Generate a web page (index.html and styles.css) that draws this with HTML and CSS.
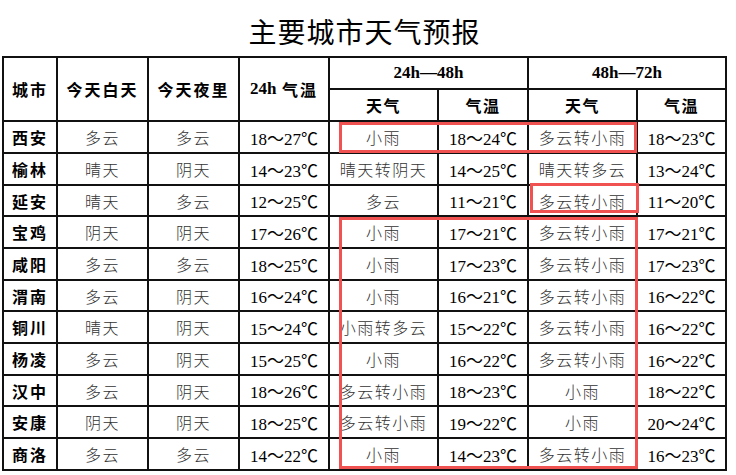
FILE: index.html
```html
<!DOCTYPE html>
<html lang="zh-CN">
<head>
<meta charset="utf-8">
<title>主要城市天气预报</title>
<link rel="stylesheet" href="styles.css">
</head>
<body>
<div class="page">
  <h1 class="title">主要城市天气预报</h1>
  <div class="sheet">
    <div class="grid">
      <div class="c hd tall">城市</div>
      <div class="c hd tall">今天白天</div>
      <div class="c hd tall">今天夜里</div>
      <div class="c hd tall"><span class="lat">24h</span>&nbsp;气温</div>
      <div class="c hd wide lat">24h—48h</div>
      <div class="c hd wide lat">48h—72h</div>
      <div class="c hd sub">天气</div>
      <div class="c hd sub">气温</div>
      <div class="c hd sub">天气</div>
      <div class="c hd sub">气温</div>

      <div class="c city">西安</div><div class="c wx">多云</div><div class="c wx">多云</div><div class="c t">18～27℃</div><div class="c wx">小雨</div><div class="c t">18～24℃</div><div class="c wx">多云转小雨</div><div class="c t">18～23℃</div>
      <div class="c city">榆林</div><div class="c wx">晴天</div><div class="c wx">阴天</div><div class="c t">14～23℃</div><div class="c wx">晴天转阴天</div><div class="c t">14～25℃</div><div class="c wx">晴天转多云</div><div class="c t">13～24℃</div>
      <div class="c city">延安</div><div class="c wx">晴天</div><div class="c wx">多云</div><div class="c t">12～25℃</div><div class="c wx">多云</div><div class="c t">11～21℃</div><div class="c wx">多云转小雨</div><div class="c t">11～20℃</div>
      <div class="c city">宝鸡</div><div class="c wx">阴天</div><div class="c wx">阴天</div><div class="c t">17～26℃</div><div class="c wx">小雨</div><div class="c t">17～21℃</div><div class="c wx">多云转小雨</div><div class="c t">17～21℃</div>
      <div class="c city">咸阳</div><div class="c wx">多云</div><div class="c wx">多云</div><div class="c t">18～25℃</div><div class="c wx">小雨</div><div class="c t">17～23℃</div><div class="c wx">多云转小雨</div><div class="c t">17～23℃</div>
      <div class="c city">渭南</div><div class="c wx">多云</div><div class="c wx">阴天</div><div class="c t">16～24℃</div><div class="c wx">小雨</div><div class="c t">16～21℃</div><div class="c wx">多云转小雨</div><div class="c t">16～22℃</div>
      <div class="c city">铜川</div><div class="c wx">晴天</div><div class="c wx">阴天</div><div class="c t">15～24℃</div><div class="c wx">小雨转多云</div><div class="c t">15～22℃</div><div class="c wx">多云转小雨</div><div class="c t">16～22℃</div>
      <div class="c city">杨凌</div><div class="c wx">多云</div><div class="c wx">阴天</div><div class="c t">15～25℃</div><div class="c wx">小雨</div><div class="c t">16～22℃</div><div class="c wx">多云转小雨</div><div class="c t">16～22℃</div>
      <div class="c city">汉中</div><div class="c wx">多云</div><div class="c wx">阴天</div><div class="c t">18～26℃</div><div class="c wx">多云转小雨</div><div class="c t">18～23℃</div><div class="c wx">小雨</div><div class="c t">18～22℃</div>
      <div class="c city">安康</div><div class="c wx">阴天</div><div class="c wx">阴天</div><div class="c t">18～25℃</div><div class="c wx">多云转小雨</div><div class="c t">19～22℃</div><div class="c wx">小雨</div><div class="c t">20～24℃</div>
      <div class="c city">商洛</div><div class="c wx">多云</div><div class="c wx">多云</div><div class="c t">14～22℃</div><div class="c wx">小雨</div><div class="c t">14～23℃</div><div class="c wx">多云转小雨</div><div class="c t">16～23℃</div>
    </div>
    <div class="mark mark-1"></div>
    <div class="mark mark-2"></div>
    <div class="mark mark-3"></div>
  </div>
</div>
</body>
</html>
```

FILE: styles.css
```css
html, body {
  margin: 0;
  padding: 0;
  background: #fff;
}

.page {
  width: 736px;
  height: 475px;
  overflow: hidden;
}

.title {
  margin: 0 0 0 2px;
  width: 725px;
  height: 50px;
  padding-top: 6px;
  line-height: 50px;
  text-align: center;
  font-family: "Noto Sans CJK SC", sans-serif;
  font-weight: 400;
  font-size: 28px;
  letter-spacing: 1px;
  color: #000;
}

.sheet {
  position: relative;
  margin-left: 2px;
  width: 725px;
}

.grid {
  display: grid;
  grid-template-columns: 52px 89px 89px 88px 107px 88px 107px 87px;
  grid-template-rows: 30px 30px 30px 30px 29px 30px 30px 29px 30px 30px 29px 30px 30px;
  gap: 2px;
  padding: 2px;
  background: #111;
}

.c {
  background: #fff;
  display: flex;
  align-items: center;
  justify-content: center;
  white-space: nowrap;
  font-family: "Noto Sans CJK SC", sans-serif;
  font-size: 16px;
  color: #000;
}

.tall {
  grid-row: span 2;
}

.wide {
  grid-column: span 2;
}

.hd {
  font-weight: 600;
  letter-spacing: 2px;
}

.hd.sub {
  letter-spacing: 1.5px;
}

.lat {
  font-family: "Liberation Serif", "Noto Sans CJK SC", serif;
  font-size: 17px;
  letter-spacing: 0;
}

.hd .lat {
  font-weight: 700;
}

.city {
  font-weight: 600;
  letter-spacing: 2px;
}

.wx {
  font-weight: 300;
  color: #333;
  letter-spacing: 1.5px;
}

.t {
  font-family: "Liberation Serif", "Noto Sans CJK SC", serif;
  font-size: 17px;
  color: #000;
}

.mark {
  position: absolute;
  box-sizing: border-box;
  border: 3px solid #f05252;
  pointer-events: none;
}

.mark-1 {
  left: 337px;
  top: 66px;
  width: 298px;
  height: 31px;
}

.mark-2 {
  left: 528px;
  top: 127px;
  width: 109px;
  height: 30px;
}

.mark-3 {
  left: 337px;
  top: 161px;
  width: 299px;
  height: 252px;
}
```
